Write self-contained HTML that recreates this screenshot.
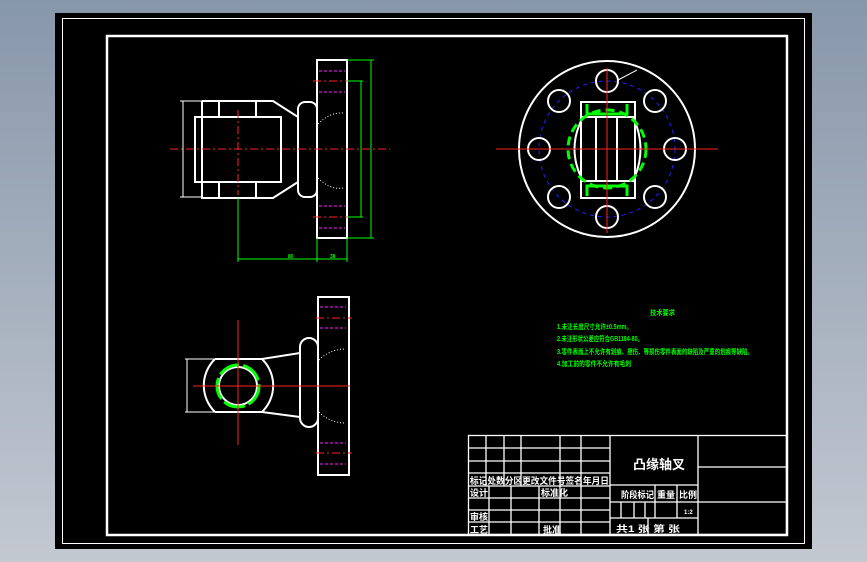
<!DOCTYPE html>
<html><head><meta charset="utf-8"><style>
html,body{margin:0;padding:0;width:867px;height:562px;overflow:hidden;background:linear-gradient(#8797aa,#c3c8d1);}
svg{position:absolute;left:0;top:0}
text{font-family:"Liberation Sans","Noto Sans CJK SC",sans-serif;font-weight:bold}
</style></head><body>
<svg width="867" height="562" viewBox="0 0 867 562">
<rect x="55" y="13" width="757" height="536" fill="#000"/>
<rect x="62.5" y="18.5" width="742" height="525" fill="none" stroke="#fff" stroke-width="1"/>
<rect x="107" y="36" width="680" height="499" fill="none" stroke="#fff" stroke-width="2.5"/>

<!-- top-left view -->
<g fill="none" stroke="#fff" stroke-width="2">
<rect x="317" y="60" width="30" height="178"/>
<path d="M202 101H273L298 117M202 101V198H273L298 182"/>
<rect x="195" y="117" width="86" height="65"/>
<path d="M219 101V117M256 101V117M219 182V198M256 182V198"/>
<rect x="298" y="102" width="19" height="95" rx="7"/>
</g>
<g stroke="#f2f" stroke-width="1" stroke-dasharray="3,2"><path d="M319 71H345M319 92H345M319 206H345M319 228H345"/></g>
<g stroke="#f22" stroke-width="1" stroke-dasharray="8,3,2,3">
<path d="M313 81H350M313 217H350M170 149H390M238 110V195"/></g>
<g stroke="#fff" stroke-width="1"><path d="M183 101V197M180 101H202M180 197H202M195 117V182"/></g>
<g stroke="#0f0" stroke-width="1" fill="none">
<path d="M347 60H374M371 60V238M347 238H374M347 81H363M361 81V217M347 217H363"/>
<path d="M238 198V262M317 238V262M347 238V262M238 259H347"/>
</g>
<text x="288" y="258" font-size="5" fill="#0f0">80</text><text x="330" y="258" font-size="5" fill="#0f0">38</text>
<path d="M318 124Q330 112 343 113M318 178Q330 190 343 188" stroke="#fff" stroke-dasharray="1,2" fill="none"/>

<!-- right view -->
<g fill="none">
<circle cx="607" cy="149" r="68" stroke="#22f" stroke-width="1" stroke-dasharray="4,4"/>
<circle cx="607" cy="149" r="88" stroke="#fff" stroke-width="2"/>
<g stroke="#fff" stroke-width="2">
<circle cx="607" cy="81" r="11"/><circle cx="607" cy="217" r="11"/>
<circle cx="539" cy="149" r="11"/><circle cx="675" cy="149" r="11"/>
<circle cx="559" cy="101" r="11"/><circle cx="655" cy="101" r="11"/>
<circle cx="559" cy="197" r="11"/><circle cx="655" cy="197" r="11"/>
<rect x="581" y="102" width="54" height="96"/>
<path d="M581 117H635M581 181H635M583 117Q566 149 583 181M633 117Q648 149 633 181M596 117V181M617 117V181"/>
</g>
<circle cx="607" cy="149" r="39" stroke="#0f0" stroke-width="3" stroke-dasharray="9,5"/>
<path d="M587 104V114H627V104M587 196V186H627V196" stroke="#0f0" stroke-width="3"/>
</g>
<path d="M496 149H718M607 68V233" stroke="#f22" stroke-width="1"/>
<path d="M618 80L637 70" stroke="#fff"/>

<!-- bottom view -->
<g fill="none" stroke="#fff" stroke-width="2">
<rect x="318" y="297" width="31" height="178"/>
<path d="M215 359H262L300 353M215 412H262L300 417"/>
<path d="M215 359A37 37 0 0 0 215 412M262 359A37 37 0 0 1 262 412"/>
<circle cx="238" cy="386" r="19"/>
<rect x="300" y="338" width="18" height="89" rx="9"/>
</g>
<circle cx="238" cy="386" r="21" fill="none" stroke="#0f0" stroke-width="3" stroke-dasharray="22,4"/>
<g stroke="#f2f" stroke-width="1" stroke-dasharray="3,2"><path d="M320 307H346M320 328H346M320 443H346M320 464H346"/></g>
<g stroke="#f22" stroke-width="1"><path d="M193 386H350M238 320V445"/><path d="M316 318H352M316 453H352" stroke-dasharray="8,3,2,3"/></g>
<path d="M319 360Q330 349 346 349M319 412Q330 423 346 423" stroke="#fff" stroke-dasharray="1,2" fill="none"/>
<path d="M187 359V412M185 359H215M185 412H215" stroke="#fff"/>

<!-- notes -->
<g fill="#0f0" font-size="7">
<text x="650" y="315" textLength="25" lengthAdjust="spacingAndGlyphs">技术要求</text>
<text x="557" y="329" textLength="75" lengthAdjust="spacingAndGlyphs">1.未注长度尺寸允许±0.5mm。</text>
<text x="557" y="341" textLength="86" lengthAdjust="spacingAndGlyphs">2.未注形状公差应符合GB1184-80。</text>
<text x="557" y="354" textLength="196" lengthAdjust="spacingAndGlyphs">3.零件表面上不允许有划痕、擦伤、等损伤零件表面的缺陷及严重的划痕等缺陷。</text>
<text x="557" y="366" textLength="74" lengthAdjust="spacingAndGlyphs">4.加工前的零件不允许有毛刺</text>
</g>

<!-- title block -->
<g stroke="#fff" stroke-width="1.3" fill="none">
<rect x="468.5" y="435.5" width="318" height="99"/>
<path d="M468 448H610M468 461H610M468 473H610M468 486H610M468 498H610M468 510H610M468 522H610"/>
<path d="M486 435V486M504 435V486M521 435V486M560 435V535M581 435V535M610 435V535"/>
<path d="M489 486V535M511 486V535M539 486V535"/>
<path d="M698 435V535M698 467H786M610 485H698M610 502H786M610 518H698"/>
<path d="M655 485V518M677 485V518M621 502V518M634 502V518M645 502V518M648 518V535"/>
</g>
<g fill="#fff" font-size="9">
<text x="470" y="484" textLength="139" lengthAdjust="spacingAndGlyphs">标记处数分区更改文件号签名年月日</text>
<text x="470" y="496">设计</text><text x="541" y="496">标准化</text>
<text x="470" y="520">审核</text><text x="470" y="533">工艺</text><text x="543" y="533">批准</text>
<text x="621" y="498" textLength="33" lengthAdjust="spacingAndGlyphs">阶段标记</text>
<text x="657" y="498">重量</text><text x="679" y="498">比例</text>
<text x="684" y="514" font-size="6">1:2</text>
<text x="616" y="532" textLength="64" lengthAdjust="spacingAndGlyphs">共1 张 第 张</text>
<text x="633" y="469" font-size="13">凸缘轴叉</text>
</g>
</svg>
</body></html>
